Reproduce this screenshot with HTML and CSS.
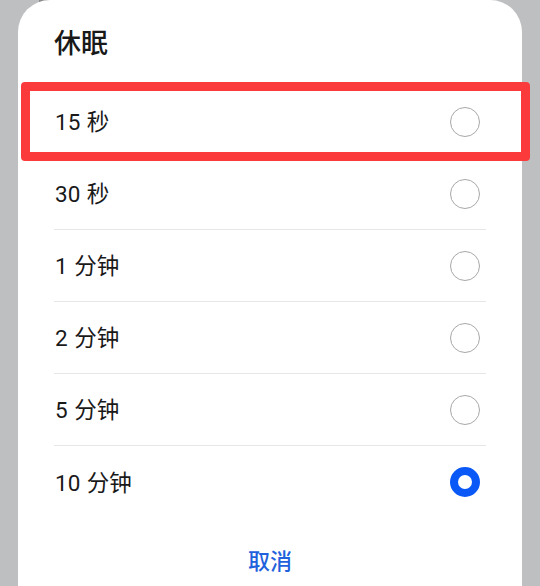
FILE: index.html
```html
<!DOCTYPE html>
<html lang="zh">
<head>
<meta charset="utf-8">
<title>休眠</title>
<link rel="stylesheet" href="styles.css">
</head>
<body>
<div class="behind"></div>
<div class="dialog">
  <div class="title">休眠</div>
  <div class="list">
    <div class="row"><span class="label">15 秒</span><span class="radio"></span></div>
    <div class="row"><span class="label">30 秒</span><span class="radio"></span></div>
    <div class="row"><span class="label">1 分钟</span><span class="radio"></span></div>
    <div class="row"><span class="label">2 分钟</span><span class="radio"></span></div>
    <div class="row"><span class="label">5 分钟</span><span class="radio"></span></div>
    <div class="row"><span class="label">10 分钟</span><span class="radio checked"></span></div>
  </div>
  <div class="actions"><span class="cancel">取消</span></div>
</div>
<div class="highlight"></div>
</body>
</html>
```

FILE: styles.css
```css
html, body {
  margin: 0;
  padding: 0;
}
body {
  background: #bebfc1;
  width: 540px;
  height: 586px;
  overflow: hidden;
  position: relative;
  font-family: Roboto, "Noto Sans CJK SC", "Noto Sans", sans-serif;
  color: #191919;
}
.behind {
  position: absolute;
  left: 39px;
  top: 0;
  width: 38px;
  height: 3px;
  background: #8c8c8e;
}
.dialog {
  position: relative;
  margin-left: 18px;
  width: 504px;
  height: 620px;
  background: #ffffff;
  border-radius: 32px 32px 0 0;
  box-sizing: border-box;
  padding-top: 26px;
}
.title {
  padding-left: 36px;
  font-size: 27px;
  font-weight: 500;
  line-height: 36px;
  height: 60px;
}
.list {
  padding: 0 36px;
}
.row {
  height: 72px;
  display: flex;
  align-items: center;
  justify-content: space-between;
  border-bottom: 1px solid #e6e6e6;
  box-sizing: border-box;
}
.row:last-child {
  border-bottom: none;
}
.label {
  font-size: 22.5px;
  line-height: 30px;
  padding-left: 1px;
  margin-top: 1px;
  word-spacing: 1px;
}
.radio {
  width: 30px;
  height: 30px;
  margin-right: 6px;
  border: 1.5px solid #a8a8a8;
  border-radius: 50%;
  box-sizing: border-box;
}
.radio.checked {
  border: 8.5px solid #0a59f7;
}
.actions {
  display: flex;
  justify-content: center;
  padding-top: 21px;
}
.cancel {
  font-size: 22px;
  font-weight: 500;
  line-height: 40px;
  color: #1f62dc;
  font-family: "Noto Sans CJK SC", sans-serif;
}
.highlight {
  position: absolute;
  left: 21px;
  top: 82px;
  width: 509px;
  height: 79px;
  box-sizing: border-box;
  border: 9.5px solid #fb3a3c;
  border-radius: 4px;
}
```
